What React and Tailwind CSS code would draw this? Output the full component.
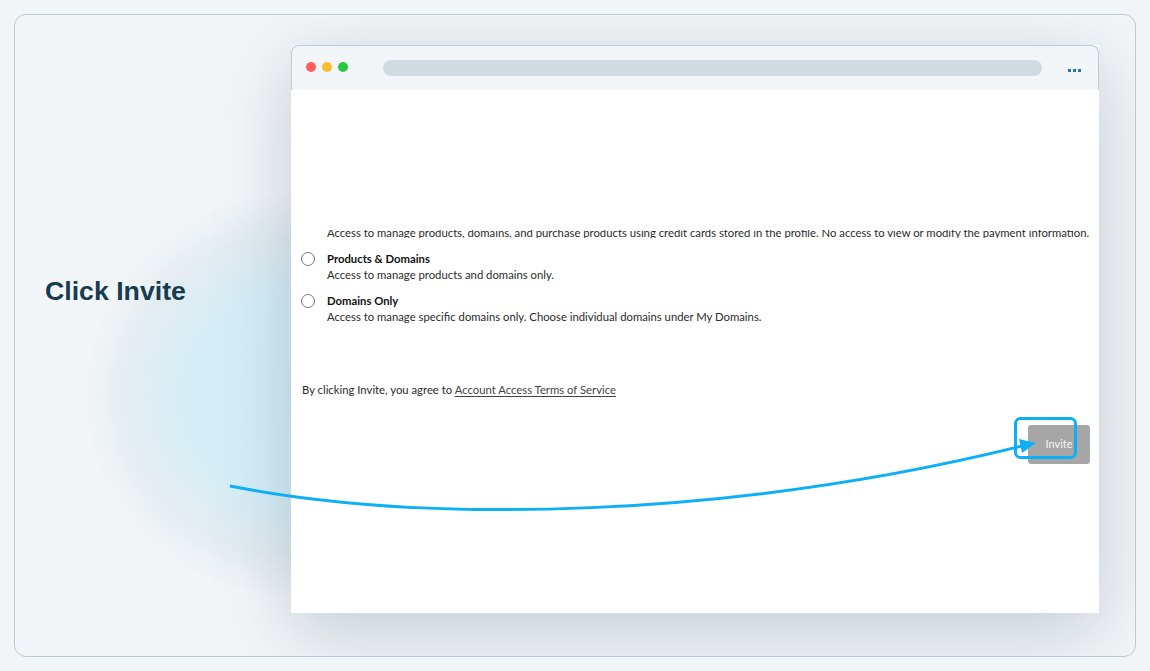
import React from "react";

const Radio = () => (
  <span className="mt-[1px] h-[14px] w-[14px] shrink-0 rounded-full border border-[#7a7a7a] bg-white" />
);

const AccessOption = ({ title, text }) => (
  <div className="flex items-start gap-[12px]">
    <Radio />
    <div className="leading-[16px]">
      <div className="font-bold text-[#111]">{title}</div>
      <div className="text-[#2b2b2b]">{text}</div>
    </div>
  </div>
);

const BrowserBar = () => (
  <div className="flex h-[45px] items-center rounded-t-[8px] border border-b-0 border-[#bccdd6] bg-[#f3f6f8] pl-[14px] pr-[17px]">
    <div className="flex -translate-y-[1px] gap-[6px]">
      <span className="h-[10px] w-[10px] rounded-full bg-[#fe5f57]" />
      <span className="h-[10px] w-[10px] rounded-full bg-[#febc2e]" />
      <span className="h-[10px] w-[10px] rounded-full bg-[#28c840]" />
    </div>
    <div className="ml-[35px] h-[16px] w-[659px] rounded-full bg-[#d1dce1]" />
    <div className="ml-auto flex translate-y-[2px] gap-[2px]">
      <span className="h-[3px] w-[3px] bg-[#2677ad]" />
      <span className="h-[3px] w-[3px] bg-[#2677ad]" />
      <span className="h-[3px] w-[3px] bg-[#2677ad]" />
    </div>
  </div>
);

const Browser = () => (
  <div className="mt-[30px] flex h-[568px] w-[808px] flex-col shadow-[0_18px_70px_rgba(70,95,115,0.28)]">
    <BrowserBar />
    <div
      className="flex-1 bg-white pl-[10px] pr-[9px] text-[11.3px]"
      style={{ fontFamily: "Lato, 'Open Sans', sans-serif" }}
    >
      <div className="h-[140px]" />
      {/* previous option scrolled under the fold */}
      <div className="h-[8px] overflow-hidden pl-[26px]">
        <div className="-mt-[5px] whitespace-nowrap leading-[16px] text-[#2b2b2b]">
          Access to manage products, domains, and purchase products using credit cards stored in the profile. No access to view or modify the payment information.
        </div>
      </div>
      <div className="mt-[13px] flex flex-col gap-[10px]">
        <AccessOption title="Products & Domains" text="Access to manage products and domains only." />
        <AccessOption
          title="Domains Only"
          text="Access to manage specific domains only. Choose individual domains under My Domains."
        />
      </div>
      <p className="ml-[1px] mt-[57px] leading-[16px] text-[#2b2b2b]">
        By clicking Invite, you agree to{" "}
        <a className="text-[#444] underline underline-offset-2">Account Access Terms of Service</a>
      </p>
      <div className="mt-[27px] flex justify-end">
        <button className="h-[39px] w-[62px] rounded-[3px] bg-[#a6a6a6] text-[11px] text-[#f4f4f4]">
          Invite
        </button>
      </div>
    </div>
  </div>
);

const Pointer = () => (
  <svg className="pointer-events-none absolute left-0 top-0" width="1150" height="671" viewBox="0 0 1150 671">
    <path d="M230 486 C 430 525, 730 518, 1022 446" fill="none" stroke="#0db0f7" strokeWidth="3" />
    <polygon points="1036,443 1019,439 1022,453" fill="#0db0f7" />
    <rect x="1015.5" y="418.5" width="60" height="39" rx="5" fill="none" stroke="#0db0f7" strokeWidth="3" />
  </svg>
);

export default function App() {
  return (
    <div className="relative h-[671px] w-[1150px] overflow-hidden bg-[#f1f5f7] p-[14px]">
      <div className="relative flex h-full overflow-hidden rounded-[12px] border border-[#b5cbd6] bg-[#f3f6f8]">
        <div className="pointer-events-none absolute left-[70px] top-[180px] h-[400px] w-[400px] rounded-full bg-[radial-gradient(ellipse_at_center,#d4edf8_0%,#d6eef8_35%,rgba(222,233,238,0.75)_55%,rgba(243,246,248,0)_72%)]" />
        <div className="relative w-[276px] pl-[30px] pt-[260px]">
          <h2
            className="text-[26.7px] font-bold leading-[32px] text-[#173c50]"
            style={{ fontFamily: "'Liberation Sans', Arial, sans-serif" }}
          >
            Click Invite
          </h2>
        </div>
        <div className="relative">
          <Browser />
        </div>
      </div>
      <Pointer />
    </div>
  );
}
